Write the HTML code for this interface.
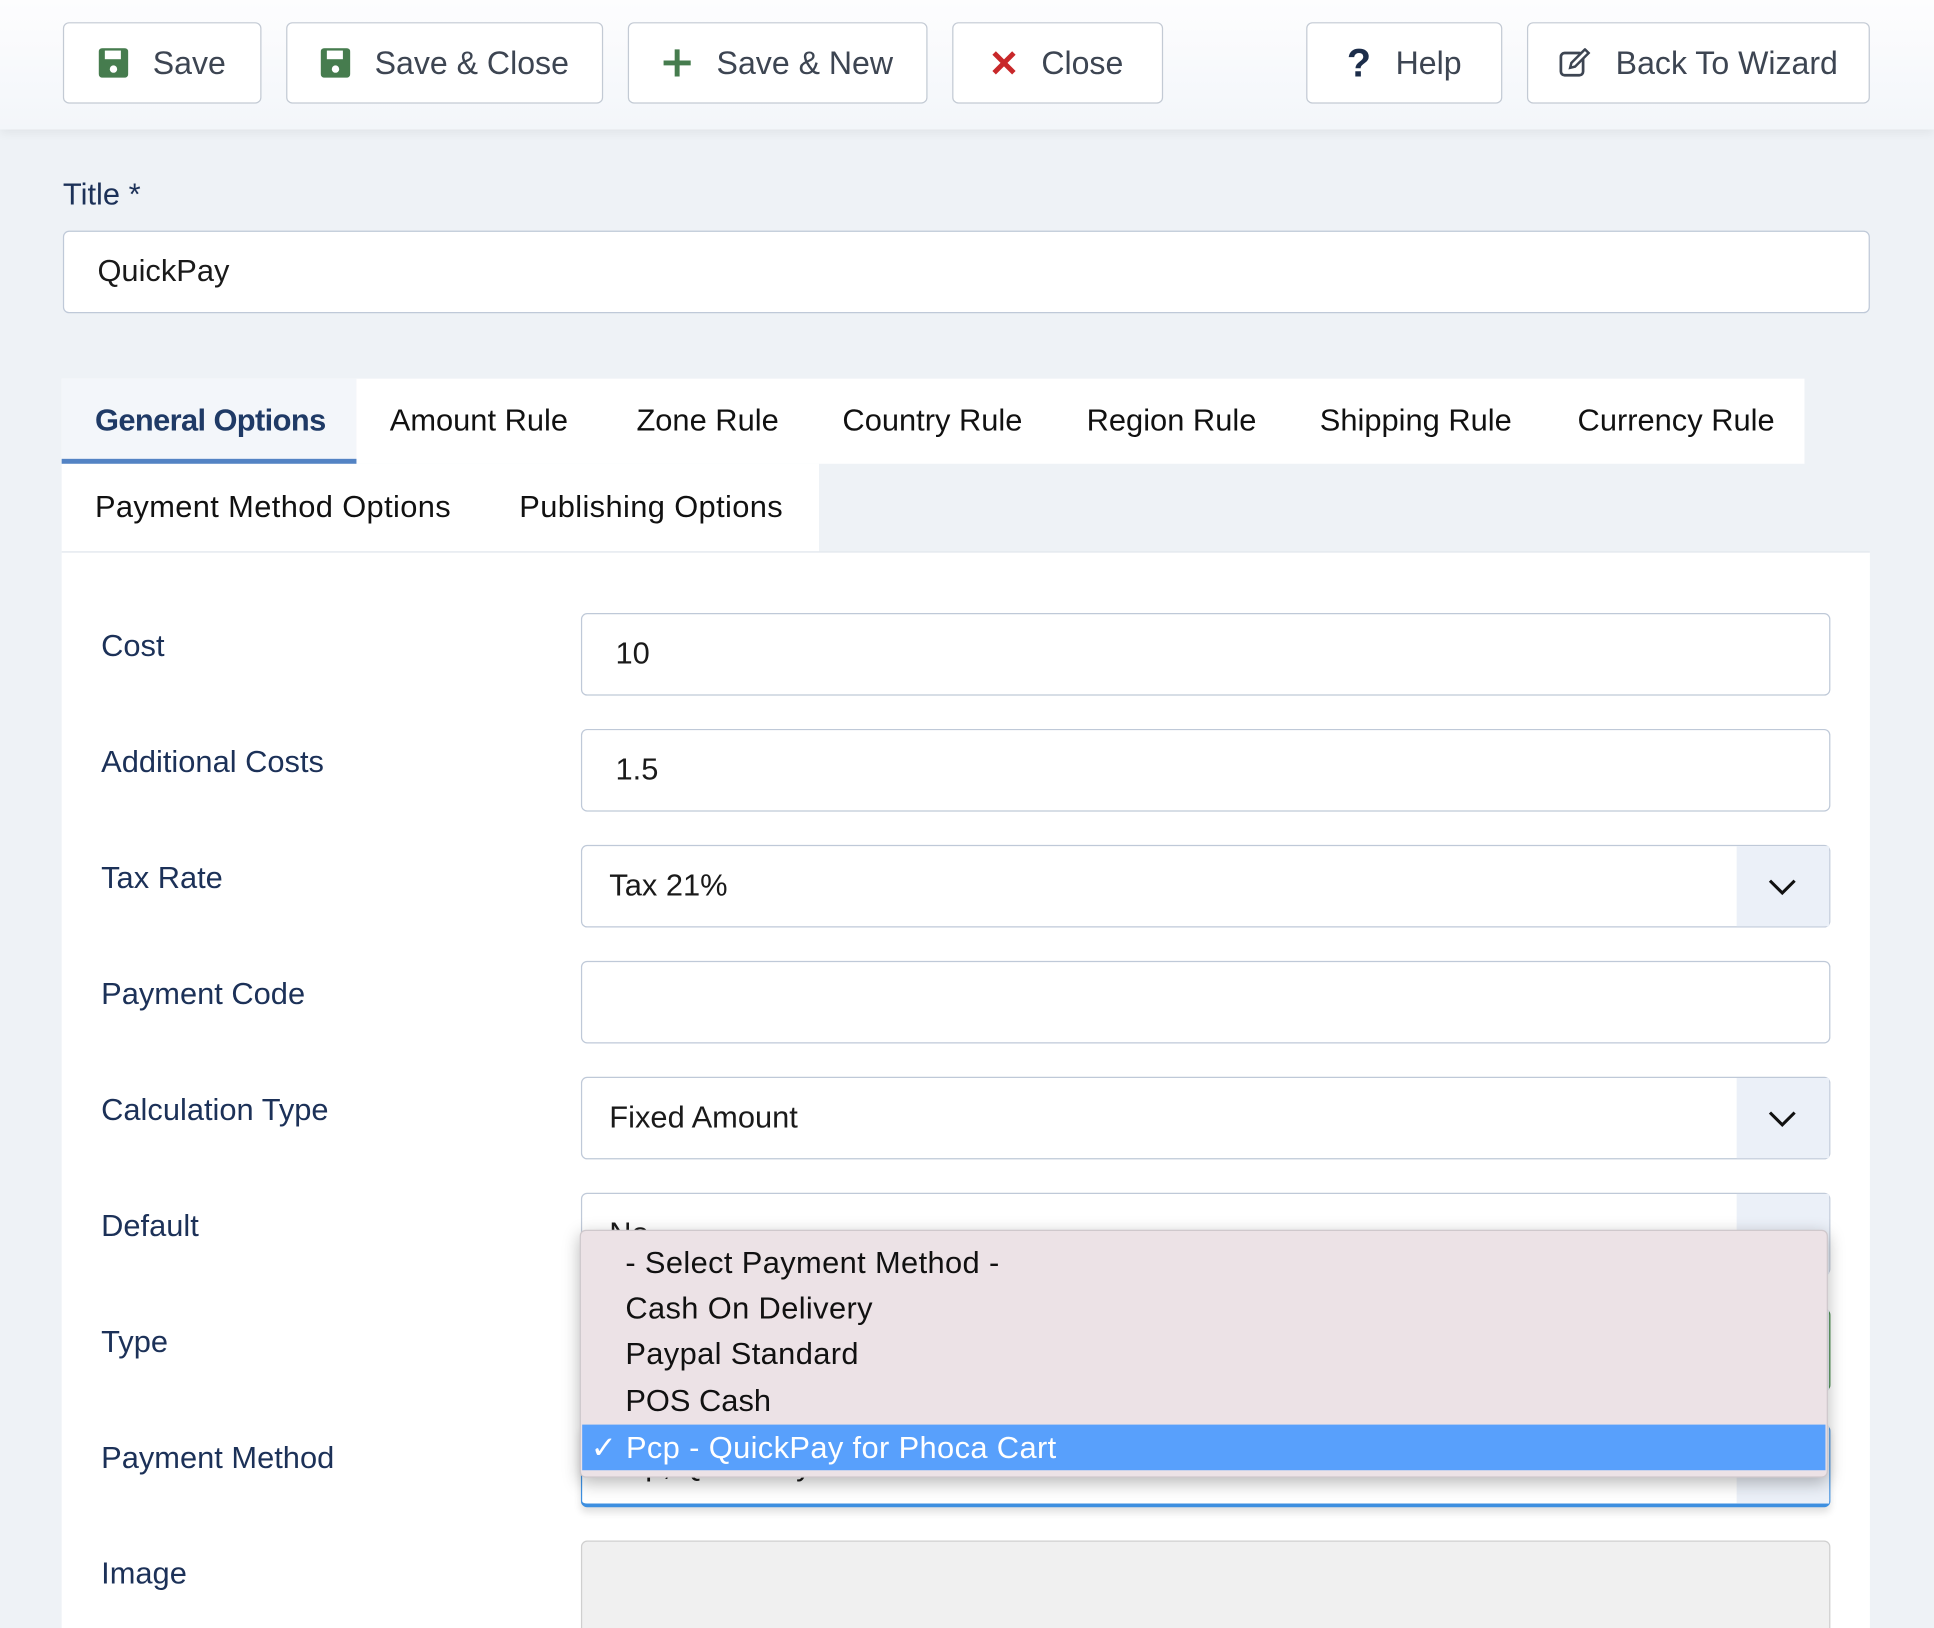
<!DOCTYPE html>
<html><head><meta charset="utf-8"><style>
html,body{margin:0;padding:0;width:1934px;height:1628px;overflow:hidden;background:#eef2f6;}
#w{position:absolute;left:0;top:0;width:1568px;height:1320px;overflow:hidden;transform:scale(1.23342);transform-origin:0 0;font-family:"Liberation Sans",sans-serif;}
.a{position:absolute;box-sizing:border-box;}
.tb{left:0;top:0;width:1568px;height:105px;background:linear-gradient(#fdfdfe,#f3f6fa);box-shadow:0 3px 8px rgba(0,0,0,.06);}
.btn{top:18px;height:66px;border:1.5px solid #c3cad4;border-radius:5px;background:#fff;font-size:26px;color:#3d4552;display:flex;align-items:center;justify-content:center;gap:20px;}
.lbl{left:82px;font-size:25px;color:#1c3158;}
.in{left:471px;width:1013px;height:67px;border:1.5px solid #bfc9d8;border-radius:5px;background:#fff;font-size:25px;color:#1a1a1a;padding-left:27px;line-height:64px;}
.sel{padding-left:22px;}
.sel .ar{position:absolute;right:0;top:0;width:75px;height:100%;background:#ebf0f8;}
.tab{top:307px;height:69px;line-height:69px;font-size:25px;color:#111;}
.it{position:absolute;left:36px;font-size:25px;color:#111;}
</style></head><body><div id="w">
<div class="a tb"></div>
<div class="a btn" style="left:51px;width:161px"><svg width="24" height="24" viewBox="0 0 24 24"><rect x="0" y="0" width="24" height="24" rx="3" fill="#467c4e"/><rect x="5" y="2" width="13" height="7" fill="#fff"/><circle cx="12" cy="17" r="3" fill="#fff"/></svg>Save</div>
<div class="a btn" style="left:232px;width:257px"><svg width="24" height="24" viewBox="0 0 24 24"><rect x="0" y="0" width="24" height="24" rx="3" fill="#467c4e"/><rect x="5" y="2" width="13" height="7" fill="#fff"/><circle cx="12" cy="17" r="3" fill="#fff"/></svg>Save &amp; Close</div>
<div class="a btn" style="left:509px;width:243px"><svg width="24" height="24" viewBox="0 0 24 24"><path d="M12 1v22M1 12h22" stroke="#467c4e" stroke-width="4"/></svg>Save &amp; New</div>
<div class="a btn" style="left:772px;width:171px"><svg width="20" height="20" viewBox="0 0 20 20"><path d="M2 2l16 16M18 2L2 18" stroke="#c8282a" stroke-width="4"/></svg>Close</div>
<div class="a btn" style="left:1059px;width:159px"><span style="font-weight:bold;font-size:32px;color:#1c2d4a">?</span>Help</div>
<div class="a btn" style="left:1238px;width:278px"><svg width="26" height="24" viewBox="0 0 26 24"><rect x="1.5" y="4" width="18" height="18" rx="3" fill="none" stroke="#3d4552" stroke-width="2.2"/><path d="M9 16l1-4 11-11 3 3-11 11z" fill="#fff" stroke="#3d4552" stroke-width="2"/></svg>Back To Wizard</div>

<div class="a" style="left:51px;top:144px;font-size:25px;color:#1c3158">Title *</div>
<div class="a in" style="left:51px;top:187px;width:1465px;padding-left:27px">QuickPay</div>

<div class="a" style="left:50px;top:307px;width:1413px;height:69px;background:#fff"></div>
<div class="a" style="left:50px;top:376px;width:614px;height:71px;background:#fff"></div>
<div class="a" style="left:50px;top:307px;width:239px;height:69px;background:#f3f6fa;border-bottom:4px solid #5383c4"></div>
<div class="a tab" style="left:77px;font-weight:bold;color:#1f3a66;letter-spacing:-0.5px">General Options</div>
<div class="a tab" style="left:316px">Amount Rule</div>
<div class="a tab" style="left:516px">Zone Rule</div>
<div class="a tab" style="left:683px">Country Rule</div>
<div class="a tab" style="left:881px">Region Rule</div>
<div class="a tab" style="left:1070px">Shipping Rule</div>
<div class="a tab" style="left:1279px">Currency Rule</div>
<div class="a tab" style="left:77px;top:377px;letter-spacing:0.3px">Payment Method Options</div>
<div class="a tab" style="left:421px;top:377px;letter-spacing:0.3px">Publishing Options</div>

<div class="a" style="left:50px;top:447px;width:1466px;height:873px;background:#fff;border-top:1.5px solid #dfe5ec"></div>

<div class="a lbl" style="top:510px">Cost</div>
<div class="a lbl" style="top:604px">Additional Costs</div>
<div class="a lbl" style="top:698px">Tax Rate</div>
<div class="a lbl" style="top:792px">Payment Code</div>
<div class="a lbl" style="top:886px">Calculation Type</div>
<div class="a lbl" style="top:980px">Default</div>
<div class="a lbl" style="top:1074px">Type</div>
<div class="a lbl" style="top:1168px">Payment Method</div>
<div class="a lbl" style="top:1262px">Image</div>

<div class="a in" style="top:497px">10</div>
<div class="a in" style="top:591px">1.5</div>
<div class="a in sel" style="top:685px">Tax 21%<div class="ar"><svg style="position:absolute;left:25px;top:26px" width="24" height="14" viewBox="0 0 24 14"><path d="M2 2l10 10 10-10" fill="none" stroke="#111" stroke-width="2.5"/></svg></div></div>
<div class="a in" style="top:779px"></div>
<div class="a in sel" style="top:873px">Fixed Amount<div class="ar"><svg style="position:absolute;left:25px;top:26px" width="24" height="14" viewBox="0 0 24 14"><path d="M2 2l10 10 10-10" fill="none" stroke="#111" stroke-width="2.5"/></svg></div></div>
<div class="a in sel" style="top:967px">No<div class="ar"></div></div>
<div class="a in sel" style="top:1061px;border-color:#2e7d32"><div class="ar"></div></div>
<div class="a in sel" style="top:1155px;border-color:#3d8fe0;border-bottom-width:3px;box-shadow:0 4px 6px rgba(0,0,0,.12)">Pcp, QuickPay<div class="ar"></div></div>
<div class="a in" style="top:1249px;height:90px;background:#f0f0f0;border-color:#cfcfcf"></div>

<div class="a" style="left:470px;top:997px;width:1012px;height:201px;background:#ece2e6;border-radius:5px;box-shadow:0 4px 14px rgba(0,0,0,.28);border:1px solid #cfc8cc">
<div class="it" style="top:12px;letter-spacing:0.3px">- Select Payment Method -</div>
<div class="it" style="top:49px;letter-spacing:0.3px">Cash On Delivery</div>
<div class="it" style="top:86px;letter-spacing:0.3px">Paypal Standard</div>
<div class="it" style="top:124px">POS Cash</div>
<div style="position:absolute;left:1px;top:157px;width:1008px;height:37px;background:#58a0fc"></div>
<div class="it" style="top:161px;left:8px;color:#fff;letter-spacing:0.3px">✓ Pcp - QuickPay for Phoca Cart</div>
</div>
</div></body></html>
